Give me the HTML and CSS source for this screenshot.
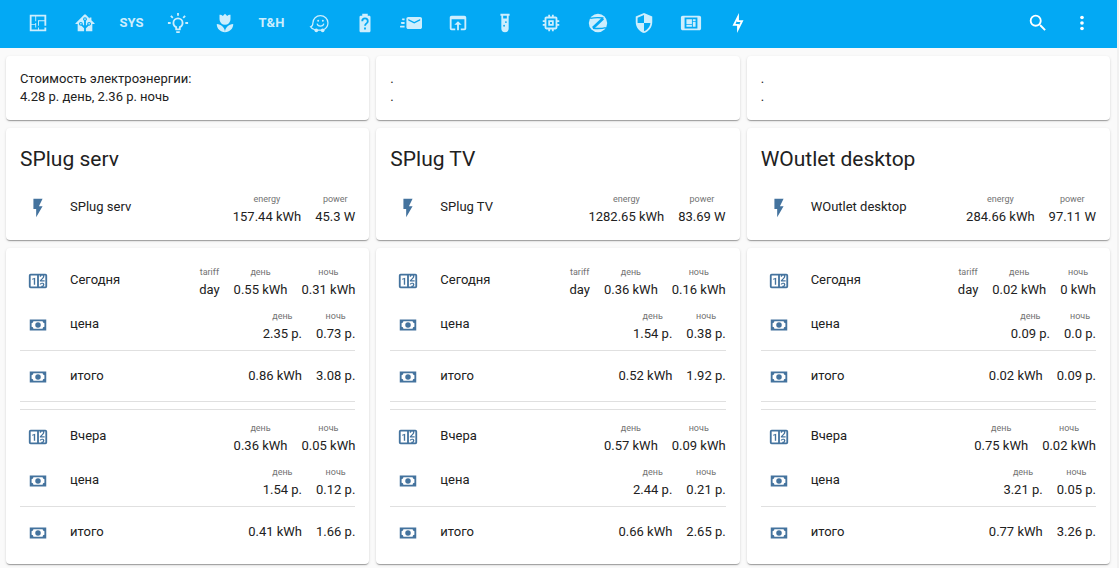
FILE: index.html
```html
<!DOCTYPE html>
<html lang="ru">
<head>
<meta charset="utf-8">
<title>Электроэнергия</title>
<link rel="stylesheet" href="styles.css">
</head>
<body>
<svg class="sprite" aria-hidden="true">
  <symbol id="bolt" viewBox="0 0 24 24"><path d="M7,2V13H10V22L17,10H13L17,2H7Z"/></symbol>
  <symbol id="cash" viewBox="0 0 24 24"><path fill-rule="evenodd" d="M3,6H21V18H3V6M7,8A2,2 0 0,1 5,10V14A2,2 0 0,1 7,16H17A2,2 0 0,1 19,14V10A2,2 0 0,1 17,8H7Z"/><circle cx="12" cy="12" r="3"/></symbol>
  <symbol id="counter" viewBox="0 0 24 24"><path d="M4,4H20A2,2 0 0,1 22,6V18A2,2 0 0,1 20,20H4A2,2 0 0,1 2,18V6A2,2 0 0,1 4,4M4,6V18H11V6H4M20,18V6H18.76C19,6.54 18.95,7.07 18.95,7.13C18.88,7.8 18.41,8.5 18.24,8.75L15.91,11.3L19.23,11.28L19.24,12.5L14.04,12.47L14,11.47C14,11.47 17.05,8.24 17.2,7.95C17.34,7.67 17.91,6 16.5,6C15.27,6.05 15.41,7.3 15.41,7.3L13.87,7.31C13.87,7.31 13.88,6.65 14.25,6H13V18H15.58L15.57,17.14L16.54,17.13C16.54,17.13 17.45,16.97 17.46,16.08C17.5,15.08 16.65,15.08 16.5,15.08C16.37,15.08 15.43,15.13 15.43,15.95H13.91C13.91,15.95 13.95,13.89 16.5,13.89C19.1,13.89 18.96,15.91 18.96,15.91C18.96,15.91 19,17.16 17.85,17.63L18.37,18H20M8.92,16H7.42V10.2L5.62,10.76V9.53L8.76,8.41H8.92V16Z"/></symbol>
</svg>

<header class="toolbar">
  <nav class="tabs">
    <a class="tab" href="#plan" aria-label="План"><svg class="icon" viewBox="0 0 24 24"><path d="M10 5V10H9V5H5V13H9V12H10V17H9V14H5V19H12V17H13V19H19V17H21V21H3V3H21V15H19V10H13V15H12V9H19V5H10Z"/></svg></a>
    <a class="tab" href="#home" aria-label="Дом"><svg class="icon" viewBox="0 0 24 24"><path d="M21.8,13H20V21H13V17.67L15.79,14.88L16.5,15C17.66,15 18.6,14.06 18.6,12.9C18.6,11.74 17.66,10.8 16.5,10.8A2.1,2.1 0 0,0 14.4,12.9L14.5,13.61L13,15.13V9.65C13.66,9.29 14.1,8.6 14.1,7.8A2.1,2.1 0 0,0 12,5.7A2.1,2.1 0 0,0 9.9,7.8C9.9,8.6 10.34,9.29 11,9.65V15.13L9.5,13.61L9.6,12.9A2.1,2.1 0 0,0 7.5,10.8A2.1,2.1 0 0,0 5.4,12.9A2.1,2.1 0 0,0 7.5,15L8.21,14.88L11,17.67V21H4V13H2.25C1.83,13 1.42,13 1.42,12.79C1.43,12.57 1.85,12.15 2.28,11.72L11,3C11.33,2.67 11.67,2.33 12,2.33C12.33,2.33 12.67,2.67 13,3L17,7V6H19V9L21.78,11.78C22.18,12.18 22.59,12.59 22.6,12.8C22.6,13 22.2,13 21.8,13M7.5,12A0.9,0.9 0 0,1 8.4,12.9A0.9,0.9 0 0,1 7.5,13.8A0.9,0.9 0 0,1 6.6,12.9A0.9,0.9 0 0,1 7.5,12M16.5,12C17,12 17.4,12.4 17.4,12.9C17.4,13.4 17,13.8 16.5,13.8A0.9,0.9 0 0,1 15.6,12.9A0.9,0.9 0 0,1 16.5,12M12,6.9C12.5,6.9 12.9,7.3 12.9,7.8C12.9,8.3 12.5,8.7 12,8.7C11.5,8.7 11.1,8.3 11.1,7.8C11.1,7.3 11.5,6.9 12,6.9Z"/></svg></a>
    <a class="tab" href="#sys">SYS</a>
    <a class="tab" href="#light" aria-label="Свет"><svg class="icon" viewBox="0 0 24 24"><path d="M20,11H23V13H20V11M1,11H4V13H1V11M13,1V4H11V1H13M4.92,3.5L7.05,5.64L5.63,7.05L3.5,4.93L4.92,3.5M16.95,5.63L19.07,3.5L20.5,4.93L18.37,7.05L16.95,5.63M12,6A6,6 0 0,1 18,12C18,14.22 16.79,16.16 15,17.2V19A1,1 0 0,1 14,20H10A1,1 0 0,1 9,19V17.2C7.21,16.16 6,14.22 6,12A6,6 0 0,1 12,6M14,21V22A1,1 0 0,1 13,23H11A1,1 0 0,1 10,22V21H14M11,18H13V15.87C14.73,15.43 16,13.86 16,12A4,4 0 0,0 12,8A4,4 0 0,0 8,12C8,13.86 9.27,15.43 11,15.87V18Z"/></svg></a>
    <a class="tab" href="#plants" aria-label="Растения"><svg class="icon" viewBox="0 0 24 24"><path d="M3,13C3,18 7,22 12,22C12,17 8,13 3,13M12,22C17,22 21,18 21,13C16,13 12,17 12,22M18,3V8A6,6 0 0,1 12,14A6,6 0 0,1 6,8V3C6.74,3 7.47,3.12 8.16,3.39C8.71,3.62 9.2,3.96 9.61,4.39L12,2L14.39,4.39C14.8,3.96 15.29,3.62 15.84,3.39C16.53,3.12 17.26,3 18,3Z"/></svg></a>
    <a class="tab" href="#th">T&amp;H</a>
    <a class="tab" href="#traffic" aria-label="Дороги"><svg class="icon" viewBox="-2 -1 25 25"><path fill="none" stroke="currentColor" stroke-width="1.4" d="M7 19.2C4.600 18.600 2.800 17.400 2 15.800C4.400 15.400 4.700 14 4.700 11.500C4.700 6.600 8.600 3.200 13.200 3.200C18 3.200 21.800 6.900 21.800 11.300C21.800 14.500 19.800 17.500 17.500 18.800M10.500 19.600H14M9.500 12.300C10.200 16 16.300 16 17.100 12.300"/><circle cx="10.700" cy="9" r="1.100"/><circle cx="16" cy="9" r="1.100"/><circle cx="8.600" cy="19.800" r="2.100"/><circle cx="15.800" cy="19.800" r="2.100"/></svg></a>
    <a class="tab" href="#battery" aria-label="Батареи"><svg class="icon" viewBox="0 0 24 24"><path fill-rule="evenodd" d="M15.07,12.25L14.17,13.17C13.63,13.71 13.25,14.18 13.09,15H11.05C11.16,14.1 11.56,13.28 12.17,12.67L13.41,11.41C13.78,11.05 14,10.55 14,10C14,8.89 13.1,8 12,8A2,2 0 0,0 10,10H8A4,4 0 0,1 12,6A4,4 0 0,1 16,10C16,10.88 15.64,11.68 15.07,12.25M13,19H11V17H13M16.67,4H15V2H9V4H7.33A1.33,1.33 0 0,0 6,5.33V20.66C6,21.4 6.6,22 7.33,22H16.67C17.4,22 18,21.4 18,20.66V5.33C18,4.59 17.4,4 16.67,4Z"/></svg></a>
    <a class="tab" href="#mail" aria-label="Почта"><svg class="icon" viewBox="0 0 24 24"><path d="M22 5.500H9C7.900 5.500 7 6.400 7 7.500V16.500C7 17.610 7.900 18.500 9 18.500H22C23.110 18.500 24 17.610 24 16.500V7.500C24 6.400 23.110 5.500 22 5.500M22 9.170L15.500 12.500L9 9.170V7.500L15.500 10.810L22 7.500V9.170M5 16.500C5 16.670 5.030 16.830 5.050 17H1C.448 17 0 16.550 0 16S.448 15 1 15H5V16.500M3 7H5.050C5.030 7.170 5 7.330 5 7.500V9H3C2.450 9 2 8.550 2 8S2.450 7 3 7M1 12C1 11.450 1.450 11 2 11H5V13H2C1.450 13 1 12.550 1 12Z"/></svg></a>
    <a class="tab" href="#apps" aria-label="Приложения"><svg class="icon" viewBox="0 0 24 24"><path d="M12,10L8,14H11V20H13V14H16M19,4H5C3.89,4 3,4.9 3,6V18A2,2 0 0,0 5,20H9V18H5V8H19V18H15V20H19A2,2 0 0,0 21,18V6A2,2 0 0,0 19,4Z"/></svg></a>
    <a class="tab" href="#test" aria-label="Тест"><svg class="icon" viewBox="0 0 24 24"><path d="M7,2V4H8V18A4,4 0 0,0 12,22A4,4 0 0,0 16,18V4H17V2H7M11,16C10.4,16 10,15.6 10,15C10,14.4 10.4,14 11,14C11.6,14 12,14.4 12,15C12,15.6 11.6,16 11,16M13,12C12.4,12 12,11.6 12,11C12,10.4 12.4,10 13,10C13.6,10 14,10.4 14,11C14,11.6 13.6,12 13,12M14,7H10V4H14V7Z"/></svg></a>
    <a class="tab" href="#chip" aria-label="Устройства"><svg class="icon" viewBox="0 0 24 24"><path d="M17,17H7V7H17M21,11V9H19V7C19,5.89 18.1,5 17,5H15V3H13V5H11V3H9V5H7C5.89,5 5,5.89 5,7V9H3V11H5V13H3V15H5V17A2,2 0 0,0 7,19H9V21H11V19H13V21H15V19H17A2,2 0 0,0 19,17V15H21V13H19V11M13,13H11V11H13M15,9H9V15H15V9Z"/></svg></a>
    <a class="tab" href="#zigbee" aria-label="Zigbee"><svg class="icon" viewBox="0 0 24 24"><circle cx="12" cy="12" r="10"/><path class="cut" d="M3.500 7C8 6 13 6 18 6.500M6.500 17.800C12 18.200 17 18 20.500 17"/><path class="cut cut-wide" d="M17.500 7L6.500 17.500"/></svg></a>
    <a class="tab" href="#security" aria-label="Охрана"><svg class="icon" viewBox="0 0 24 24"><path d="M12,12H19C18.47,16.11 15.72,19.78 12,20.92V12H5V6.3L12,3.19M12,1L3,5V11C3,16.55 6.84,21.73 12,23C17.16,21.73 21,16.55 21,11V5L12,1Z"/></svg></a>
    <a class="tab" href="#tablet" aria-label="Планшет"><svg class="icon" viewBox="0 0 24 24"><path fill-rule="evenodd" d="M21 4H3C1.900 4 1 4.900 1 6V18C1 19.100 1.900 20 3 20H21C22.100 20 23 19.100 23 18V6C23 4.900 22.100 4 21 4M19 18H5V6H19V18M7 8H13V13H7V8M14 8H17V10H14V8M14 11H17V16H14V11M7 14H13V16H7V14Z"/></svg></a>
    <a class="tab tab-active" href="#energy" aria-label="Энергия" aria-current="page"><svg class="icon" viewBox="0 0 24 24"><path d="M11 9.470V11H14.760L13 14.530V13H9.240L11 9.470M13 1L6 15H11V23L18 9H13V1Z"/></svg></a>
  </nav>
  <div class="actions">
    <button class="action" aria-label="Поиск"><svg class="icon" viewBox="0 0 24 24"><path d="M9.5,3A6.5,6.5 0 0,1 16,9.5C16,11.11 15.41,12.59 14.44,13.73L14.71,14H15.5L20.5,19L19,20.5L14,15.5V14.71L13.73,14.44C12.59,15.41 11.11,16 9.5,16A6.5,6.5 0 0,1 3,9.5A6.5,6.5 0 0,1 9.5,3M9.5,5C7,5 5,7 5,9.5C5,12 7,14 9.5,14C12,14 14,12 14,9.5C14,7 12,5 9.5,5Z"/></svg></button>
    <button class="action" aria-label="Меню"><svg class="icon" viewBox="0 0 24 24"><circle cx="12" cy="6" r="2"/><circle cx="12" cy="12" r="2"/><circle cx="12" cy="18" r="2"/></svg></button>
  </div>
</header>

<main class="columns">
  <section class="column">
    <article class="card note"><p>Стоимость электроэнергии:<br>4.28 р. день, 2.36 р. ночь</p></article>
    <article class="card">
      <h2 class="title">SPlug serv</h2>
      <div class="row"><span class="badge"><svg class="icon"><use href="#bolt"/></svg></span><span class="name">SPlug serv</span><span class="value"><small>energy</small>157.44 kWh</span><span class="value"><small>power</small>45.3 W</span></div>
    </article>
    <article class="card meter">
      <div class="row"><span class="badge"><svg class="icon"><use href="#counter"/></svg></span><span class="name">Сегодня</span><span class="value"><small>tariff</small>day</span><span class="value"><small>день</small>0.55 kWh</span><span class="value"><small>ночь</small>0.31 kWh</span></div>
      <div class="row"><span class="badge"><svg class="icon"><use href="#cash"/></svg></span><span class="name">цена</span><span class="value"><small>день</small>2.35 р.</span><span class="value"><small>ночь</small>0.73 р.</span></div>
      <hr class="line">
      <div class="row total"><span class="badge"><svg class="icon"><use href="#cash"/></svg></span><span class="name">итого</span><span class="value">0.86 kWh</span><span class="value">3.08 р.</span></div>
      <hr class="line double">
      <div class="row"><span class="badge"><svg class="icon"><use href="#counter"/></svg></span><span class="name">Вчера</span><span class="value"><small>день</small>0.36 kWh</span><span class="value"><small>ночь</small>0.05 kWh</span></div>
      <div class="row"><span class="badge"><svg class="icon"><use href="#cash"/></svg></span><span class="name">цена</span><span class="value"><small>день</small>1.54 р.</span><span class="value"><small>ночь</small>0.12 р.</span></div>
      <hr class="line">
      <div class="row total"><span class="badge"><svg class="icon"><use href="#cash"/></svg></span><span class="name">итого</span><span class="value">0.41 kWh</span><span class="value">1.66 р.</span></div>
    </article>
  </section>

  <section class="column">
    <article class="card note"><p>.<br>.</p></article>
    <article class="card">
      <h2 class="title">SPlug TV</h2>
      <div class="row"><span class="badge"><svg class="icon"><use href="#bolt"/></svg></span><span class="name">SPlug TV</span><span class="value"><small>energy</small>1282.65 kWh</span><span class="value"><small>power</small>83.69 W</span></div>
    </article>
    <article class="card meter">
      <div class="row"><span class="badge"><svg class="icon"><use href="#counter"/></svg></span><span class="name">Сегодня</span><span class="value"><small>tariff</small>day</span><span class="value"><small>день</small>0.36 kWh</span><span class="value"><small>ночь</small>0.16 kWh</span></div>
      <div class="row"><span class="badge"><svg class="icon"><use href="#cash"/></svg></span><span class="name">цена</span><span class="value"><small>день</small>1.54 р.</span><span class="value"><small>ночь</small>0.38 р.</span></div>
      <hr class="line">
      <div class="row total"><span class="badge"><svg class="icon"><use href="#cash"/></svg></span><span class="name">итого</span><span class="value">0.52 kWh</span><span class="value">1.92 р.</span></div>
      <hr class="line double">
      <div class="row"><span class="badge"><svg class="icon"><use href="#counter"/></svg></span><span class="name">Вчера</span><span class="value"><small>день</small>0.57 kWh</span><span class="value"><small>ночь</small>0.09 kWh</span></div>
      <div class="row"><span class="badge"><svg class="icon"><use href="#cash"/></svg></span><span class="name">цена</span><span class="value"><small>день</small>2.44 р.</span><span class="value"><small>ночь</small>0.21 р.</span></div>
      <hr class="line">
      <div class="row total"><span class="badge"><svg class="icon"><use href="#cash"/></svg></span><span class="name">итого</span><span class="value">0.66 kWh</span><span class="value">2.65 р.</span></div>
    </article>
  </section>

  <section class="column">
    <article class="card note"><p>.<br>.</p></article>
    <article class="card">
      <h2 class="title">WOutlet desktop</h2>
      <div class="row"><span class="badge"><svg class="icon"><use href="#bolt"/></svg></span><span class="name">WOutlet desktop</span><span class="value"><small>energy</small>284.66 kWh</span><span class="value"><small>power</small>97.11 W</span></div>
    </article>
    <article class="card meter">
      <div class="row"><span class="badge"><svg class="icon"><use href="#counter"/></svg></span><span class="name">Сегодня</span><span class="value"><small>tariff</small>day</span><span class="value"><small>день</small>0.02 kWh</span><span class="value"><small>ночь</small>0 kWh</span></div>
      <div class="row"><span class="badge"><svg class="icon"><use href="#cash"/></svg></span><span class="name">цена</span><span class="value"><small>день</small>0.09 р.</span><span class="value"><small>ночь</small>0.0 р.</span></div>
      <hr class="line">
      <div class="row total"><span class="badge"><svg class="icon"><use href="#cash"/></svg></span><span class="name">итого</span><span class="value">0.02 kWh</span><span class="value">0.09 р.</span></div>
      <hr class="line double">
      <div class="row"><span class="badge"><svg class="icon"><use href="#counter"/></svg></span><span class="name">Вчера</span><span class="value"><small>день</small>0.75 kWh</span><span class="value"><small>ночь</small>0.02 kWh</span></div>
      <div class="row"><span class="badge"><svg class="icon"><use href="#cash"/></svg></span><span class="name">цена</span><span class="value"><small>день</small>3.21 р.</span><span class="value"><small>ночь</small>0.05 р.</span></div>
      <hr class="line">
      <div class="row total"><span class="badge"><svg class="icon"><use href="#cash"/></svg></span><span class="name">итого</span><span class="value">0.77 kWh</span><span class="value">3.26 р.</span></div>
    </article>
  </section>
</main>
</body>
</html>
```
FILE: styles.css
```css
* {
  box-sizing: border-box;
}

body {
  margin: 0;
  border-right: 2px solid #f1f1f1;
  background: #fafafa;
  color: #212121;
  font: 13px/18px Roboto, "Noto Sans", sans-serif;
}

.sprite {
  display: none;
}

.icon {
  display: block;
  width: 22px;
  height: 22px;
  fill: currentColor;
}

.toolbar {
  display: flex;
  justify-content: space-between;
  height: 48px;
  padding: 0 13px 2px 15px;
  background: #03a9f4;
  color: #fff;
}

.tabs {
  display: flex;
  flex: 0 1 746px;
}

.tab {
  display: flex;
  flex: 1 1 0;
  align-items: center;
  justify-content: center;
  color: #cdeefd;
  font-weight: 700;
  text-decoration: none;
}

.tab-active {
  color: #fff;
}

.cut {
  fill: none;
  stroke: #03a9f4;
  stroke-width: 1.5;
}

.cut-wide {
  stroke-width: 3;
}

.actions {
  display: flex;
}

.action {
  display: flex;
  align-items: center;
  justify-content: center;
  width: 44px;
  padding: 0;
  border: 0;
  background: none;
  color: #fff;
}

.columns {
  display: grid;
  grid-template-columns: repeat(3, 1fr);
  gap: 7px;
  padding: 8px 7px 4px 6px;
}

.column {
  display: flex;
  flex-direction: column;
  gap: 8px;
  min-width: 0;
}

.card {
  padding: 14px;
  border-radius: 4px;
  background: #fff;
  box-shadow: 0 2px 1px -1px rgba(0, 0, 0, .2), 0 1px 1px 0 rgba(0, 0, 0, .14), 0 1px 3px 0 rgba(0, 0, 0, .12);
}

.meter {
  padding: 15px 14px 13px;
}

.note p {
  margin: 0;
}

.title {
  margin: -4px 0 9px;
  font-size: 21px;
  font-weight: 400;
  line-height: 43px;
}

.row {
  display: flex;
  align-items: center;
  gap: 14px;
  min-height: 36px;
}

.row + .row {
  margin-top: 8px;
}

.badge {
  display: flex;
  flex: none;
  align-items: center;
  justify-content: center;
  width: 36px;
  height: 36px;
  color: #44739e;
}

.name {
  flex: 1;
  padding-bottom: 2px;
}

.value {
  text-align: center;
  white-space: nowrap;
}

.total .value {
  padding-bottom: 2px;
}

.value small {
  display: block;
  color: #727272;
  font-size: 9px;
}

.line {
  height: 1px;
  margin: 7px 0 8px;
  border: 0;
  border-top: 1px solid #e0e0e0;
}

.double {
  height: 9px;
  margin: 6px 0 9px;
  border-bottom: 1px solid #e0e0e0;
}
```
